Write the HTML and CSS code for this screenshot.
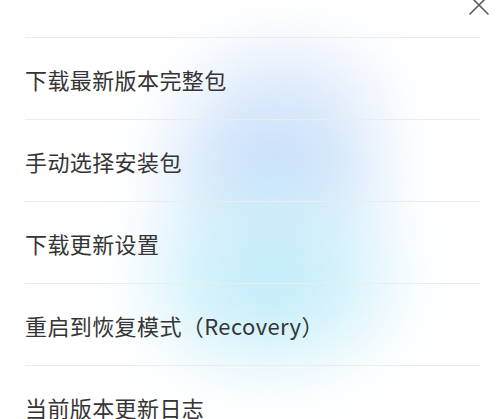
FILE: index.html
```html
<!DOCTYPE html>
<html lang="zh-CN">
<head>
<meta charset="utf-8">
<link rel="stylesheet" href="styles.css">
</head>
<body>
<div class="sheet">
  <div class="glow glow-haze"></div>
  <div class="glow glow-blue"></div>
  <div class="glow glow-cyan"></div>
  <div class="header">
    <svg class="close" width="20" height="20" viewBox="0 0 20 20" aria-label="关闭">
      <path d="M1 1 L19 19 M19 1 L1 19" stroke="#5a5a5a" stroke-width="1.6" fill="none" stroke-linecap="round"/>
    </svg>
  </div>
  <ul class="menu">
    <li class="item">下载最新版本完整包</li>
    <li class="item">手动选择安装包</li>
    <li class="item">下载更新设置</li>
    <li class="item">重启到恢复模式（Recovery）</li>
    <li class="item">当前版本更新日志</li>
  </ul>
</div>
</body>
</html>
```
FILE: styles.css
```css
html, body {
  margin: 0;
  padding: 0;
  background: #ffffff;
  overflow: hidden;
}
.sheet {
  position: relative;
  width: 500px;
  height: 419px;
  overflow: hidden;
  font-family: "Noto Sans CJK SC", "Noto Sans", sans-serif;
  color: #353535;
}
.glow {
  position: absolute;
  border-radius: 50%;
  z-index: 0;
}
.glow-haze {
  left: 190px;
  top: 30px;
  width: 200px;
  height: 120px;
  filter: blur(30px);
  background: radial-gradient(ellipse at center, rgba(225,235,252,0.8) 0%, rgba(255,255,255,0) 100%);
}
.glow-blue {
  left: 160px;
  top: 70px;
  width: 230px;
  height: 190px;
  filter: blur(32px);
  background: radial-gradient(ellipse at center, rgba(190,218,250,1) 0%, rgba(205,226,250,0.75) 45%, rgba(255,255,255,0) 100%);
}
.glow-cyan {
  left: 140px;
  top: 185px;
  width: 260px;
  height: 190px;
  filter: blur(32px);
  background: radial-gradient(ellipse at center, rgba(184,234,250,1) 0%, rgba(200,238,250,0.75) 45%, rgba(255,255,255,0) 100%);
}
.header {
  position: relative;
  z-index: 1;
  height: 37px;
  display: flex;
  justify-content: flex-end;
  padding-right: 11px;
}
.close {
  margin-top: -5px;
}
.menu {
  position: relative;
  z-index: 1;
  list-style: none;
  margin: 0 20px 0 25px;
  padding: 0;
}
.item {
  height: 82px;
  border-top: 1px solid #ececec;
  box-sizing: border-box;
  display: flex;
  align-items: center;
  font-size: 22px;
  letter-spacing: 0.4px;
}
```
